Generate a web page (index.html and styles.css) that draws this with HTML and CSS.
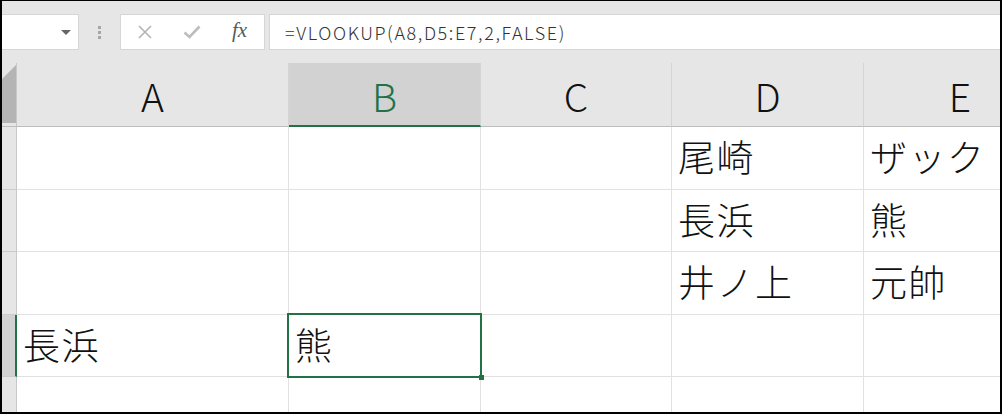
FILE: index.html
```html
<!DOCTYPE html>
<html lang="ja">
<head>
<meta charset="utf-8">
<link rel="stylesheet" href="styles.css">
</head>
<body>
<div class="frame">
  <div class="toolbar">
    <div class="namebox"><span class="caret"></span></div>
    <div class="grip"><span></span><span></span><span></span></div>
    <div class="fxbox">
      <svg class="ico" width="16" height="16" viewBox="0 0 16 16"><path d="M2 2 L14 14 M14 2 L2 14" stroke="#b3b3b3" stroke-width="1.6" fill="none"/></svg>
      <svg class="ico" width="18" height="14" viewBox="0 0 18 14"><path d="M1.5 7.5 L6.5 12 L16.5 1.5" stroke="#bdbdbd" stroke-width="2.6" fill="none"/></svg>
      <span class="fx">fx</span>
    </div>
    <div class="formula">=VLOOKUP(A8,D5:E7,2,FALSE)</div>
  </div>
  <div class="sheet">
    <div class="corner"><svg width="15" height="63" viewBox="0 0 15 63"><polygon points="14,2 14,60 0,60 0,16" fill="#b4b4b4"/></svg></div>
    <div class="colh">A</div>
    <div class="colh sel">B</div>
    <div class="colh">C</div>
    <div class="colh">D</div>
    <div class="colh last">E</div>

    <div class="rowh"></div>
    <div class="cell"></div><div class="cell"></div><div class="cell"></div><div class="cell">尾崎</div><div class="cell last">ザック</div>

    <div class="rowh"></div>
    <div class="cell"></div><div class="cell"></div><div class="cell"></div><div class="cell">長浜</div><div class="cell last">熊</div>

    <div class="rowh"></div>
    <div class="cell"></div><div class="cell"></div><div class="cell"></div><div class="cell">井ノ上</div><div class="cell last">元帥</div>

    <div class="rowh selrow"></div>
    <div class="cell">長浜</div><div class="cell active">熊<span class="selbox"><span class="handle"></span></span></div><div class="cell"></div><div class="cell"></div><div class="cell last"></div>

    <div class="rowh"></div>
    <div class="cell"></div><div class="cell"></div><div class="cell"></div><div class="cell"></div><div class="cell last"></div>
  </div>
</div>
</body>
</html>
```

FILE: styles.css
```css
html, body {
  margin: 0;
  padding: 0;
  background: #fff;
}
.frame {
  width: 1002px;
  height: 414px;
  box-sizing: border-box;
  border-top: 1px solid #000;
  border-left: 2px solid #000;
  border-right: 2px solid #000;
  border-bottom: 2px solid #000;
  overflow: hidden;
  background: #e6e6e6;
  font-family: "Noto Sans CJK JP", "Noto Sans", sans-serif;
}
.toolbar {
  height: 62px;
  display: flex;
  align-items: flex-start;
  padding-top: 13px;
  box-sizing: border-box;
}
.namebox {
  width: 77px;
  height: 36px;
  box-sizing: border-box;
  background: #fff;
  border: 1px solid #d6d6d6;
  border-left: none;
  display: flex;
  align-items: center;
  justify-content: flex-end;
  padding-right: 7px;
}
.caret {
  width: 0;
  height: 0;
  border-left: 5px solid transparent;
  border-right: 5px solid transparent;
  border-top: 5px solid #666;
}
.grip {
  width: 41px;
  height: 36px;
  display: flex;
  flex-direction: column;
  align-items: center;
  justify-content: center;
  gap: 2px;
}
.grip span {
  width: 3px;
  height: 3px;
  background: #a6a6a6;
}
.fxbox {
  width: 145px;
  height: 36px;
  box-sizing: border-box;
  background: #fff;
  border: 1px solid #d6d6d6;
  display: flex;
  align-items: center;
  padding-left: 16px;
  gap: 30px;
}
.ico { display: block; }
.fxbox .fx {
  font-family: "Liberation Serif", "DejaVu Serif", serif;
  font-style: italic;
  font-size: 21px;
  color: #5a5a5a;
  margin-left: 1px;
  line-height: 1;
  padding-bottom: 3px;
}
.formula {
  margin-left: 4px;
  flex: 1;
  height: 36px;
  box-sizing: border-box;
  background: #fff;
  border: 1px solid #d6d6d6;
  border-right: none;
  display: flex;
  align-items: center;
  padding-left: 15px;
  font-size: 18px;
  font-weight: 300;
  color: #333;
  letter-spacing: 1.6px;
}
.sheet {
  display: grid;
  grid-template-columns: 15px 272px 192px 191px 192px 192px;
  grid-template-rows: 64px 63px 62px 63px 62px 62px;
}
.corner {
  border-right: 1px solid #c8c8c8;
  border-bottom: 1px solid #bdbdbd;
  box-sizing: border-box;
  overflow: hidden;
}
.corner svg { display: block; }
.colh {
  box-sizing: border-box;
  border-right: 1px solid #d4d4d4;
  border-bottom: 1px solid #bdbdbd;
  display: flex;
  align-items: center;
  justify-content: center;
  font-size: 39px;
  font-weight: 300;
  color: #111;
  line-height: 1;
  padding-top: 1px;
}
.colh.sel {
  background: #d2d2d2;
  color: #217346;
  border-bottom: 2px solid #217346;
  padding-top: 2px;
}
.rowh {
  box-sizing: border-box;
  border-right: 1px solid #c8c8c8;
  border-bottom: 1px solid #cbcbcb;
}
.rowh.selrow {
  background: #d2d2d2;
  border-right: 2px solid #217346;
}
.cell {
  position: relative;
  box-sizing: border-box;
  background: #fff;
  border-right: 1px solid #e1e1e1;
  border-bottom: 1px solid #e1e1e1;
  display: flex;
  align-items: center;
  padding-left: 6px;
  padding-bottom: 3px;
  font-size: 37px;
  font-weight: 300;
  letter-spacing: 1.5px;
  color: #111;
  line-height: 1;
  white-space: nowrap;
}
.cell.active { z-index: 2; }
.cell.last, .colh.last { border-right: none; }
.selbox {
  position: absolute;
  top: -2px;
  left: -2px;
  right: -2px;
  bottom: -2px;
  border: 2px solid #217346;
}
.handle {
  position: absolute;
  right: -4px;
  bottom: -4px;
  width: 5px;
  height: 5px;
  background: #217346;
}
```
